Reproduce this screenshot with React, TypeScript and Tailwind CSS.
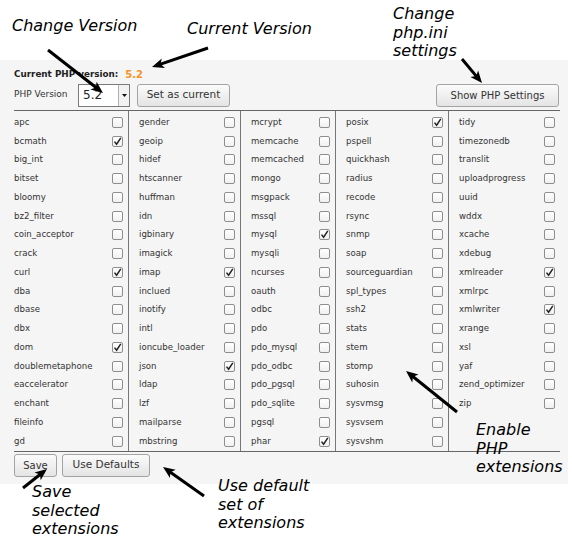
import React from "react";

type Ext = [string, boolean];

const columns: { w: string; items: Ext[] }[] = [
  {
    w: "w-[114px]",
    items: [
      ["apc", false], ["bcmath", true], ["big_int", false], ["bitset", false], ["bloomy", false],
      ["bz2_filter", false], ["coin_acceptor", false], ["crack", false], ["curl", true], ["dba", false],
      ["dbase", false], ["dbx", false], ["dom", true], ["doublemetaphone", false], ["eaccelerator", false],
      ["enchant", false], ["fileinfo", false], ["gd", false],
    ],
  },
  {
    w: "w-[112px]",
    items: [
      ["gender", false], ["geoip", false], ["hidef", false], ["htscanner", false], ["huffman", false],
      ["idn", false], ["igbinary", false], ["imagick", false], ["imap", true], ["inclued", false],
      ["inotify", false], ["intl", false], ["ioncube_loader", false], ["json", true], ["ldap", false],
      ["lzf", false], ["mailparse", false], ["mbstring", false],
    ],
  },
  {
    w: "w-[95px]",
    items: [
      ["mcrypt", false], ["memcache", false], ["memcached", false], ["mongo", false], ["msgpack", false],
      ["mssql", false], ["mysql", true], ["mysqli", false], ["ncurses", false], ["oauth", false],
      ["odbc", false], ["pdo", false], ["pdo_mysql", false], ["pdo_odbc", false], ["pdo_pgsql", false],
      ["pdo_sqlite", false], ["pgsql", false], ["phar", true],
    ],
  },
  {
    w: "w-[113px]",
    items: [
      ["posix", true], ["pspell", false], ["quickhash", false], ["radius", false], ["recode", false],
      ["rsync", false], ["snmp", false], ["soap", false], ["sourceguardian", false], ["spl_types", false],
      ["ssh2", false], ["stats", false], ["stem", false], ["stomp", false], ["suhosin", false],
      ["sysvmsg", false], ["sysvsem", false], ["sysvshm", false],
    ],
  },
  {
    w: "w-[112px]",
    items: [
      ["tidy", false], ["timezonedb", false], ["translit", false], ["uploadprogress", false], ["uuid", false],
      ["wddx", false], ["xcache", false], ["xdebug", false], ["xmlreader", true], ["xmlrpc", false],
      ["xmlwriter", true], ["xrange", false], ["xsl", false], ["yaf", false], ["zend_optimizer", false],
      ["zip", false],
    ],
  },
];

function Checkbox({ checked }: { checked: boolean }) {
  return (
    <span className="relative w-[11px] h-[11px] border border-[#8e8e8e] rounded-[2px] bg-gradient-to-b from-[#ffffff] to-[#f0f0f0] flex items-center justify-center">
      {checked && (
        <svg width="9" height="9" viewBox="0 0 9 9" className="absolute left-[0px] top-[0px]">
          <path d="M1.5 4.6 L3.6 7.2 L7.8 0.8" fill="none" stroke="#222" strokeWidth="1.5" />
        </svg>
      )}
    </span>
  );
}

function Arrow({ x1, y1, x2, y2 }: { x1: number; y1: number; x2: number; y2: number }) {
  const dx = x2 - x1;
  const dy = y2 - y1;
  const len = Math.sqrt(dx * dx + dy * dy);
  const ux = dx / len;
  const uy = dy / len;
  const hl = 12;
  const hw = 5;
  const bx = x2 - ux * hl;
  const by = y2 - uy * hl;
  const p1 = `${bx - uy * hw},${by + ux * hw}`;
  const p2 = `${bx + uy * hw},${by - ux * hw}`;
  return (
    <g>
      <line x1={x1} y1={y1} x2={x2 - ux * 6} y2={y2 - uy * 6} stroke="#000" strokeWidth="3" />
      <polygon points={`${x2},${y2} ${p1} ${bx + ux * 3},${by + uy * 3} ${p2}`} fill="#000" />
    </g>
  );
}

const btn =
  "h-[23px] border border-[#a3a3a3] rounded-[3px] bg-gradient-to-b from-[#fbfbfb] to-[#e4e4e4] text-[10.5px] text-[#333] flex items-center justify-center";

export default function App() {
  return (
    <div
      className="relative w-[572px] h-[543px] bg-white overflow-hidden"
      style={{ fontFamily: '"DejaVu Sans", sans-serif' }}
    >
      <div className="pt-[60px]">
        <div className="w-[568px] bg-[#f5f5f5] pl-[14px] pt-[8px] pb-[7px]">
          <div className="flex items-center h-[13px] text-[8.8px] font-bold text-[#222]">
            <span>Current PHP version:</span>
            <span className="ml-[7px] text-[10px] text-[#f7931e]">5.2</span>
          </div>
          <div className="flex items-center mt-[2px] h-[24px] w-[546px]">
            <span className="text-[9px] text-[#333] w-[64px]">PHP Version</span>
            <div className="w-[52px] h-[23px] bg-white border border-[#7a7a7a] flex items-center">
              <span className="flex-1 pl-[4px] text-[12px] text-[#222]">5.2</span>
              <span className="w-[11px] h-full border-l border-[#b0b0b0] flex items-center justify-center bg-[#f2f2f2]">
                <svg width="5" height="3" viewBox="0 0 5 3">
                  <path d="M0 0 L5 0 L2.5 3 Z" fill="#111" />
                </svg>
              </span>
            </div>
            <button className={`${btn} ml-[7px] w-[93px]`}>Set as current</button>
            <div className="flex-1" />
            <button className={`${btn} w-[123px] text-[10px] mr-[1px]`}>Show PHP Settings</button>
          </div>
          <div className="mt-[3px] w-[546px] flex border-t border-b border-[#666] pt-[2px]">
            {columns.map((col, ci) => (
              <div
                key={ci}
                className={`${col.w} ${ci > 0 ? "border-l border-[#777] -mt-[2px] pt-[2px] pl-[10px]" : ""} pr-[5px] flex flex-col`}
              >
                {col.items.map(([name, checked]) => (
                  <div key={name} className="h-[18.75px] flex items-center justify-between text-[8.6px] text-[#333]">
                    <span>{name}</span>
                    <Checkbox checked={checked} />
                  </div>
                ))}
              </div>
            ))}
          </div>
          <div className="flex gap-[5px] mt-[2px]">
            <button className={`${btn} w-[43px] text-[10px]`}>Save</button>
            <button className={`${btn} w-[88px]`}>Use Defaults</button>
          </div>
        </div>
      </div>

      <div className="absolute inset-0 pointer-events-none italic text-[16px] text-black leading-[18.5px]">
        <div className="absolute left-[12px] top-[17px]">Change Version</div>
        <div className="absolute left-[187px] top-[20px]">Current Version</div>
        <div className="absolute left-[393px] top-[5px]">
          Change
          <br />
          php.ini
          <br />
          settings
        </div>
        <div className="absolute left-[476px] top-[421px]">
          Enable
          <br />
          PHP
          <br />
          extensions
        </div>
        <div className="absolute left-[32px] top-[483px]">
          Save
          <br />
          selected
          <br />
          extensions
        </div>
        <div className="absolute left-[218px] top-[477px]">
          Use default
          <br />
          set of
          <br />
          extensions
        </div>
      </div>

      <svg className="absolute inset-0 pointer-events-none" width="572" height="543">
        <Arrow x1={48} y1={50} x2={103} y2={93} />
        <Arrow x1={208} y1={48} x2={152} y2={67} />
        <Arrow x1={462} y1={59} x2={482} y2={83} />
        <Arrow x1={457} y1={412} x2={406} y2={371} />
        <Arrow x1={23} y1={488} x2={47} y2={469} />
        <Arrow x1={204} y1={496} x2={163} y2={467} />
      </svg>
    </div>
  );
}
